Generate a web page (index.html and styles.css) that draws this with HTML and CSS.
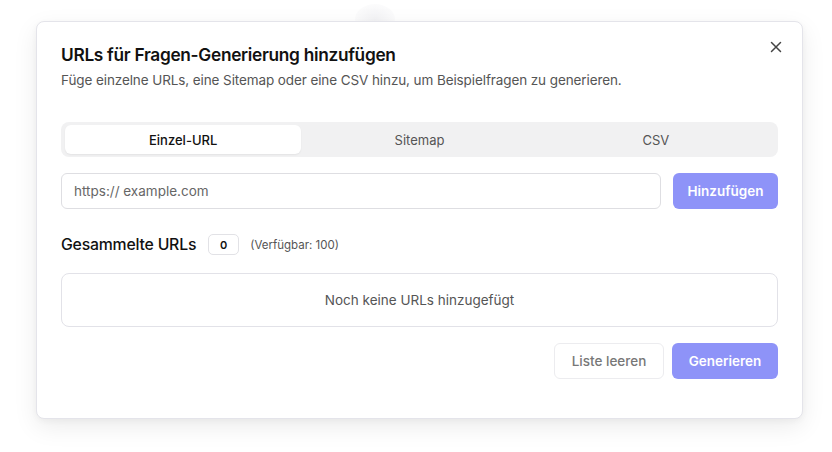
FILE: index.html
```html
<!DOCTYPE html>
<html lang="de">
<head>
<meta charset="utf-8">
<link rel="stylesheet" href="styles.css">
</head>
<body>
<div class="page">
  <div class="backdrop-glow"></div>
  <div class="dialog">
    <button class="close" aria-label="Schließen">
      <svg width="12" height="12" viewBox="0 0 12 12"><path d="M1.5 1.5 L10.5 10.5 M10.5 1.5 L1.5 10.5" stroke="#444" stroke-width="1.5" stroke-linecap="round"/></svg>
    </button>
    <h2 class="title">URLs für Fragen-Generierung hinzufügen</h2>
    <p class="subtitle">Füge einzelne URLs, eine Sitemap oder eine CSV hinzu, um Beispielfragen zu generieren.</p>
    <div class="tabs">
      <div class="tab active">Einzel-URL</div>
      <div class="tab">Sitemap</div>
      <div class="tab">CSV</div>
    </div>
    <div class="input-row">
      <div class="input">https:// example.com</div>
      <button class="btn primary add">Hinzufügen</button>
    </div>
    <div class="collected">
      <span class="label">Gesammelte URLs</span>
      <span class="badge">0</span>
      <span class="avail">(Verfügbar: 100)</span>
    </div>
    <div class="empty">Noch keine URLs hinzugefügt</div>
    <div class="footer">
      <button class="btn secondary">Liste leeren</button>
      <button class="btn primary gen">Generieren</button>
    </div>
  </div>
</div>
</body>
</html>
```
FILE: styles.css
```css
* { box-sizing: border-box; }
html, body { margin: 0; padding: 0; background: #ffffff; }
body { font-family: Inter, "Noto Sans", sans-serif; color: #111; }
.page { position: relative; width: 832px; height: 452px; padding: 21px 0 0 36px; overflow: hidden; }
.backdrop-glow { position: absolute; left: 355px; top: 4px; width: 40px; height: 30px; border-radius: 50%; background: radial-gradient(#f3f3f5, rgba(255,255,255,0)); }
.dialog { position: relative; width: 767px; height: 398px; background: #fff; border: 1px solid #e4e4ea; border-radius: 8px; box-shadow: 0 8px 24px rgba(0,0,0,0.08), 0 2px 6px rgba(0,0,0,0.04); padding: 22px 24px 0 24px; }
.close { position: absolute; right: 19px; top: 18px; width: 14px; height: 14px; padding: 0; border: 0; background: none; display: flex; align-items: center; justify-content: center; }
.title { margin: 0; font-size: 17.3px; font-weight: 600; letter-spacing: -0.3px; line-height: 22px; color: #111; }
.subtitle { margin: 5px 0 0; font-size: 13.5px; line-height: 18px; color: #555; letter-spacing: -0.1px; }
.tabs { margin-top: 33px; height: 35px; background: #f1f1f2; border-radius: 8px; padding: 3px 4px; display: grid; grid-template-columns: 1fr 1fr 1fr; }
.tab { display: flex; align-items: center; justify-content: center; font-size: 13px; color: #555; border-radius: 6px; }
.tab.active { background: #fff; color: #111; font-weight: 500; box-shadow: 0 1px 2px rgba(0,0,0,0.06); }
.input-row { margin-top: 16px; display: flex; gap: 12px; }
.input { flex: 1; height: 36px; border: 1px solid #dedee2; border-radius: 6px; padding: 0 12px; display: flex; align-items: center; font-size: 13.5px; color: #666; }
.btn { height: 36px; border-radius: 6px; font-family: inherit; font-size: 13.5px; font-weight: 600; padding: 0 12px; display: inline-flex; align-items: center; justify-content: center; }
.btn.primary { background: #8e93f8; color: #fff; border: 0; }
.add { width: 105px; }
.collected { margin-top: 25px; display: flex; align-items: center; height: 21px; }
.label { font-size: 15.8px; font-weight: 500; color: #111; letter-spacing: -0.2px; }
.badge { margin-left: 12px; width: 31px; height: 21px; border: 1px solid #e2e2e6; border-radius: 5px; display: flex; align-items: center; justify-content: center; font-size: 11px; font-weight: 600; }
.avail { margin-left: 11px; font-size: 11.5px; color: #555; }
.empty { margin-top: 18px; height: 54px; border: 1px solid #e2e2e8; border-radius: 8px; display: flex; align-items: center; justify-content: center; font-size: 13.5px; color: #555; }
.footer { margin-top: 16px; display: flex; justify-content: flex-end; gap: 8px; }
.btn.secondary { width: 110px; background: #fff; border: 1px solid #ececef; color: #777; font-weight: 500; }
.gen { width: 106px; }
```
